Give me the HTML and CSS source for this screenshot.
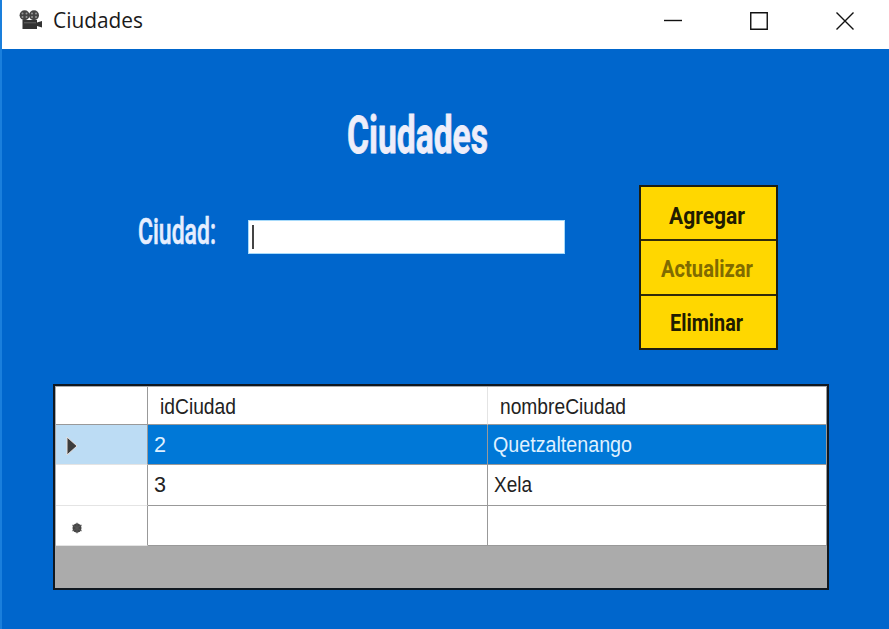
FILE: index.html
```
<!DOCTYPE html>
<html lang="es">
<head>
<meta charset="utf-8">
<title>Ciudades</title>
<link rel="stylesheet" href="styles.css">
</head>
<body>
<div class="window">
  <header class="titlebar">
    <svg class="app-icon" width="24" height="20" viewBox="0 0 24 20">
      <circle cx="5.6" cy="5.2" r="5" fill="#444"/><circle cx="15" cy="5.2" r="5" fill="#444"/>
      <g fill="#999"><circle cx="3.5" cy="3.6" r="1"/><circle cx="7.5" cy="3.6" r="1"/><circle cx="3.5" cy="7" r="1"/><circle cx="7.5" cy="7" r="1"/><circle cx="13" cy="3.6" r="1"/><circle cx="17" cy="3.6" r="1"/><circle cx="13" cy="7" r="1"/><circle cx="17" cy="7" r="1"/></g>
      <path d="M3.5 10H18v2.5l5-1.5v6.5L18 16v3H3.5z" fill="#333"/><path d="M5 12.8h12" stroke="#666"/>
    </svg>
    <svg class="caption" width="92" height="49"><text x="0" y="28" textLength="90" lengthAdjust="spacingAndGlyphs">Ciudades</text></svg>
    <div class="controls">
      <svg width="18" height="18"><path d="M0 8.5h18"/></svg>
      <svg width="18" height="18"><path d="M.75.75h16.5v16.5H.75z"/></svg>
      <svg width="18" height="18"><path d="M.5.5l17 17M17.5.5l-17 17"/></svg>
    </div>
  </header>
  <main class="form">
    <h1 class="heading"><svg width="142" height="60"><text x="0" y="44" textLength="141" lengthAdjust="spacingAndGlyphs">Ciudades</text></svg></h1>
    <div class="editor">
      <label class="label" for="city"><svg width="79" height="50"><text x="0" y="38" textLength="78" lengthAdjust="spacingAndGlyphs">Ciudad:</text></svg></label>
      <div class="input" id="city"><span class="caret"></span></div>
      <div class="actions">
        <button class="action"><svg width="76" height="40"><text x="0" y="25" textLength="76" lengthAdjust="spacingAndGlyphs">Agregar</text></svg></button>
        <button class="action muted"><svg width="92" height="40"><text x="0" y="24" textLength="92" lengthAdjust="spacingAndGlyphs">Actualizar</text></svg></button>
        <button class="action"><svg width="74" height="40"><text x="0" y="23" textLength="73" lengthAdjust="spacingAndGlyphs">Eliminar</text></svg></button>
      </div>
    </div>
    <div class="grid">
      <div class="row head">
        <div class="cell marker"></div>
        <div class="cell"><svg width="77" height="30"><text x="0" y="27" textLength="76" lengthAdjust="spacingAndGlyphs">idCiudad</text></svg></div>
        <div class="cell"><svg width="127" height="30"><text x="0" y="27" textLength="126" lengthAdjust="spacingAndGlyphs">nombreCiudad</text></svg></div>
      </div>
      <div class="row selected">
        <div class="cell marker"><svg width="12" height="20"><path d="M1 1l10 9L1 19z" fill="#3c3c3c" stroke="#e8e0dc"/></svg></div>
        <div class="cell"><svg width="12" height="30"><text x="0" y="27" textLength="12" lengthAdjust="spacingAndGlyphs">2</text></svg></div>
        <div class="cell"><svg width="139" height="30"><text x="-1" y="27" textLength="139" lengthAdjust="spacingAndGlyphs">Quetzaltenango</text></svg></div>
      </div>
      <div class="row">
        <div class="cell marker"></div>
        <div class="cell"><svg width="12" height="30"><text x="0" y="27" textLength="12" lengthAdjust="spacingAndGlyphs">3</text></svg></div>
        <div class="cell"><svg width="39" height="30"><text x="0" y="27" textLength="38" lengthAdjust="spacingAndGlyphs">Xela</text></svg></div>
      </div>
      <div class="row fresh">
        <div class="cell marker"><svg width="12" height="12"><circle cx="6" cy="6" r="4.5" fill="#444"/><path d="M6 .8v10.4M1.5 3l9 6M1.5 9l9-6" stroke="#555" stroke-width="1.2"/></svg></div>
        <div class="cell"></div>
        <div class="cell"></div>
      </div>
    </div>
  </main>
</div>
</body>
</html>
```
FILE: styles.css
```
* { box-sizing: border-box; }
body { margin: 0; overflow: hidden; }
svg { display: block; overflow: visible; flex: none; }
.window {
  width: 889px;
  height: 629px;
  display: flex;
  flex-direction: column;
  border-left: 2px solid #1a7fdc;
  background: #0066cc;
}
.titlebar {
  height: 49px;
  display: flex;
  background: #fff;
}
.app-icon { margin: 10px 0 0 17px; }
.caption {
  margin-left: 10px;
  font: 21.5px "Open Sans", sans-serif;
  fill: #1a1a1a;
}
.controls {
  display: flex;
  gap: 68px;
  margin: 12px 35px 0 auto;
  fill: none;
  stroke: #111;
  stroke-width: 1.4;
}
.form { flex: 1; }
.heading {
  margin: 0;
  padding: 60px 0 0 345px;
  font: 700 52px Roboto, sans-serif;
  fill: #eeeefa;
  stroke: #eeeefa;
  stroke-width: .8;
}
.editor {
  display: flex;
  height: 165px;
  margin-top: 16px;
}
.label {
  width: 79px;
  margin: 21px 0 0 136px;
  font: 500 36.5px Roboto, sans-serif;
  fill: #e6eeff;
  stroke: #e6eeff;
  stroke-width: .6;
}
.input {
  width: 317px;
  height: 34px;
  margin: 35px 0 0 31px;
  padding: 4px 0 0 3px;
  background: #fff;
  border: 1px solid #a6dafb;
}
.caret {
  display: block;
  width: 2px;
  height: 24px;
  background: #444;
}
.actions {
  display: flex;
  flex-direction: column;
  width: 139px;
  height: 165px;
  margin-left: 74px;
  border: 2px solid #1c1d12;
  background: #ffd700;
}
.action {
  flex: 1;
  display: flex;
  justify-content: center;
  padding: 12px 4px 0 0;
  border: 0;
  border-bottom: 2px solid #302a0a;
  background: none;
  font: 700 24.5px Roboto, sans-serif;
  fill: #211c00;
}
.action:last-child { border-bottom: 0; }
.muted { fill: #806b00; }
.grid {
  width: 776px;
  height: 206px;
  margin: 34px 0 0 51px;
  padding: 1px 0 0 1px;
  border: 2px solid #101820;
  background: #ababab;
  font: 21.5px "Liberation Sans", sans-serif;
  fill: #222;
}
.row {
  display: grid;
  grid-template-columns: 92px 340px 339px;
  height: 40px;
}
.head { height: 38px; }
.row:nth-child(3) { height: 41px; }
.cell {
  padding-left: 6px;
  border-right: 1px solid #999;
  border-bottom: 1px solid #999;
  background: #fff;
}
.head .cell { padding-left: 12px; }
.head .cell:nth-child(2) { border-right-color: #e4e4e4; }
.row:not(.head) .marker { border-bottom-color: #e4e4e4; }
.marker svg { margin-top: 11px; margin-left: 4px; }
.fresh .marker svg { margin-top: 16px; margin-left: 9px; }
.selected .cell {
  background: #0078d7;
  fill: #dff0ff;
}
.selected .marker { background: #bcdcf4; }
```
